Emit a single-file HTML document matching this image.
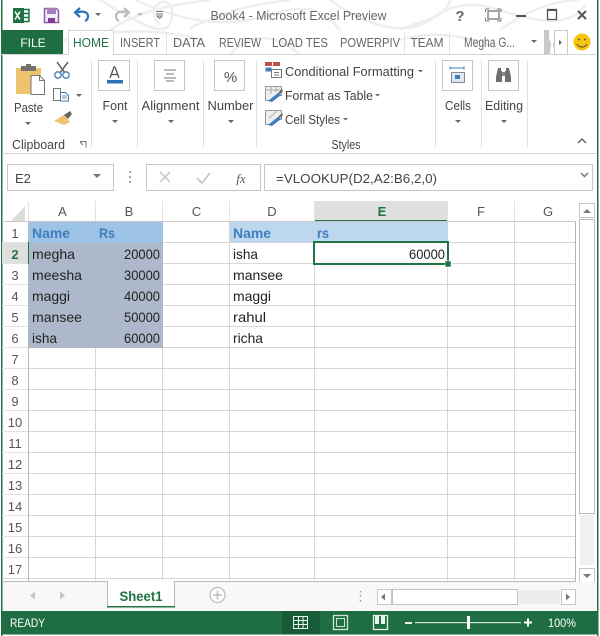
<!DOCTYPE html>
<html><head><meta charset="utf-8"><style>
html,body{margin:0;padding:0;background:#fff;width:600px;height:636px;overflow:hidden}
svg{display:block}
text{font-family:"Liberation Sans",sans-serif;fill:#444}
.c{font-size:14px;fill:#222}
.h{font-size:13px;fill:#555;text-anchor:middle}
.b{font-size:14px;font-weight:bold;fill:#3f7ebd}
.r{font-size:13px;fill:#555;text-anchor:middle}
.l{font-size:13px;fill:#444;text-anchor:middle}
.s{font-size:13px;fill:#444}
.t{font-size:12.5px;fill:#666;text-anchor:middle}
</style></head><body>
<svg width="600" height="636" viewBox="0 0 600 636" xmlns="http://www.w3.org/2000/svg">
<rect width="600" height="636" fill="#fff"/>
<!-- title decoration -->
<g fill="none" stroke="#eeeeee" stroke-width="2.500">
<path d="M100 0C150 30 170 40 172 15S140 5 160 25"/>
<path d="M110 30C140 10 170 5 210 0"/>
<path d="M135 0C180 20 220 30 270 15C300 5 320 5 340 30"/>
<path d="M190 28C230 10 250 5 290 0"/>
<path d="M330 0C370 30 410 35 430 20S470 0 500 10C530 20 570 30 585 5"/>
<path d="M400 30C420 20 445 20 450 0"/>
<path d="M500 30C520 15 550 0 580 0"/>
<path d="M30 55C60 30 160 25 200 40M300 55C280 35 250 30 230 55M400 40C430 30 470 35 500 50"/>
</g>
<!-- window borders -->
<rect x="1" y="0" width="1.500" height="636" fill="#217346"/>
<rect x="597" y="0" width="1.500" height="636" fill="#217346"/>
<!-- QAT -->
<rect x="13" y="8" width="11" height="15" fill="#1e7145"/>
<path d="M24 9.500h5v12h-5M24 13.500h5M24 17.500h5" fill="none" stroke="#1e7145" stroke-width="1.500"/>
<path d="M15 11.500l5 8M20 11.500l-5 8" stroke="#fff" stroke-width="1.500"/>
<path d="M44.500 8.500h12l2 2v12h-14z" fill="#f4eff7" stroke="#8a5aa8" stroke-width="1.500"/>
<rect x="47" y="8" width="9" height="6" fill="#a47fbe"/>
<rect x="48" y="18" width="7" height="5" fill="#7d3c98"/>
<path d="M85 21c3-1 3-4 3-5 0-4-5-5-9-4h-2" fill="none" stroke="#2b72b8" stroke-width="2.200"/>
<path d="M80 8l-5 4.500 5 4.500" fill="none" stroke="#2b72b8" stroke-width="2.200"/>
<path d="M95 13h6l-3 3z" fill="#666"/>
<path d="M119 21c-3-1-3-4-3-5 0-4 5-5 9-4h2" fill="none" stroke="#bbb" stroke-width="2.200"/>
<path d="M124 8l5 4.500-5 4.500" fill="none" stroke="#bbb" stroke-width="2.200"/>
<path d="M137 13h6l-3 3z" fill="#bbb"/>
<path d="M156 11.500h7M156 14h7M157 16h5l-2.500 2.500z" fill="none" stroke="#777"/>
<text x="298.500" y="20" style="font-size:13px;fill:#666;text-anchor:middle" textLength="176" lengthAdjust="spacingAndGlyphs">Book4 - Microsoft Excel Preview</text>
<text x="460" y="21" style="font-size:15px;font-weight:bold;fill:#666;text-anchor:middle">?</text>
<rect x="488" y="11" width="11" height="8" fill="none" stroke="#777" stroke-width="1.300"/>
<path d="M485.500 9h4M485.500 9v3M497 9h4M501 9v3M485.500 21h4M485.500 18v3M497 21h4M501 18v3" stroke="#777" fill="none"/>
<rect x="516" y="15" width="10" height="2" fill="#555"/>
<rect x="547.500" y="9.500" width="9" height="10" fill="none" stroke="#555" stroke-width="1.300"/><rect x="547" y="9" width="10" height="2" fill="#555"/>
<path d="M578 11l8 8M586 11l-8 8" stroke="#555" stroke-width="2"/>
<!-- tabs -->
<rect x="2" y="30" width="61" height="25" fill="#1e6e42"/>
<text x="33" y="47" style="font-size:12px;fill:#fff;text-anchor:middle">FILE</text>
<path d="M0 54.500H68M114 54.500H596" stroke="#d4d4d4"/>
<path d="M68.500 55V30.500H113.500V55" fill="#fff" stroke="#d4d4d4"/>
<text x="91" y="47" style="font-size:12.500px;fill:#217346;text-anchor:middle" textLength="36" lengthAdjust="spacingAndGlyphs">HOME</text>
<text x="140" y="47" class="t" textLength="40" lengthAdjust="spacingAndGlyphs">INSERT</text>
<text x="189" y="47" class="t" textLength="32" lengthAdjust="spacingAndGlyphs">DATA</text>
<text x="240" y="47" class="t" textLength="42" lengthAdjust="spacingAndGlyphs">REVIEW</text>
<text x="300" y="47" class="t" textLength="56" lengthAdjust="spacingAndGlyphs">LOAD TES</text>
<text x="370" y="47" class="t" textLength="60" lengthAdjust="spacingAndGlyphs">POWERPIV</text>
<text x="427" y="47" class="t" textLength="33" lengthAdjust="spacingAndGlyphs">TEAM</text>
<path d="M166.500 32V54M404.500 32V54M449.500 32V54" stroke="#e4e4e4"/>
<text x="464" y="47" style="font-size:13.500px;fill:#666" textLength="51" lengthAdjust="spacingAndGlyphs">Megha G...</text>
<path d="M531 40h6l-3 3z" fill="#666"/>
<path d="M544 30h11v24h-11z" fill="#c8c8c8"/><path d="M549 30h6v11l-2 3 2 10h-5l1-11-2-5z" fill="#fff"/>
<rect x="554.500" y="30.500" width="13" height="24" fill="#fff" stroke="#ccc"/>
<path d="M559 40l3 2.500-3 2.500z" fill="#666"/>
<circle cx="582" cy="42" r="8.500" fill="#f5c60c"/>
<circle cx="579" cy="39.500" r="1" fill="#654"/><circle cx="585" cy="39.500" r="1" fill="#654"/>
<path d="M577 44c2 4 8 4 10 0" fill="none" stroke="#654" stroke-width="1.200"/>
<!-- ribbon separators -->
<path d="M91.500 60V148M137.500 60V148M203.500 60V148M256.500 60V148M435.500 60V148M481.500 60V148M527.500 60V148" stroke="#e2e2e2"/>
<path d="M2 153.500H597" stroke="#d4d4d4"/>
<!-- Paste -->
<rect x="16" y="68" width="25" height="26" fill="#eec36f"/>
<rect x="21" y="66" width="15" height="5" fill="#77706a"/><rect x="26" y="64" width="5" height="4" fill="#77706a"/>
<path d="M31 75.500h8.500l5 5v14H31z" fill="#fff" stroke="#777"/>
<path d="M39.500 75.500v5h5" fill="none" stroke="#777"/>
<text x="28.500" y="112" class="l" textLength="29" lengthAdjust="spacingAndGlyphs">Paste</text>
<path d="M25 122h6l-3 3z" fill="#666"/>
<!-- cut copy painter -->
<path d="M57 62l8 11M68 62l-8 11" stroke="#666" stroke-width="1.500"/>
<circle cx="58" cy="75" r="3.200" fill="none" stroke="#3f7ebd" stroke-width="1.300"/><circle cx="66" cy="75" r="3.200" fill="none" stroke="#3f7ebd" stroke-width="1.300"/>
<path d="M53.500 88.500h7v12h-7z" fill="#fff" stroke="#777"/><path d="M60.500 92.500h5l3 3v5.500h-8z" fill="#fff" stroke="#3f7ebd"/>
<path d="M62 96h5M62 98h5" stroke="#888"/>
<path d="M76 94h6l-3 3z" fill="#666"/>
<path d="M54 121l10-6 6 7-6 3z" fill="#eec36f"/><path d="M64 115l6-4 2 3-4 5z" fill="#666"/>
<text x="12" y="149" class="s" textLength="53" lengthAdjust="spacingAndGlyphs">Clipboard</text>
<path d="M80 141.500h6v6M83 145l-3-3" fill="none" stroke="#777"/>
<!-- Font Alignment Number -->
<rect x="98.500" y="60.500" width="31" height="30" fill="#fff" stroke="#c6c6c6"/>
<path d="M110 78l4-11h1l4 11M111.500 74.500h6" fill="none" stroke="#555" stroke-width="1.300"/>
<rect x="107" y="80" width="16" height="3.500" fill="#2b72b8"/>
<text x="115" y="110" class="l" textLength="25" lengthAdjust="spacingAndGlyphs">Font</text>
<path d="M112 120h6l-3 3z" fill="#666"/>
<rect x="154.500" y="60.500" width="30" height="30" fill="#fff" stroke="#c6c6c6"/>
<path d="M164 70h12M166 74h8M164 78h12M166 81h8" stroke="#777"/>
<text x="170.500" y="110" class="l" textLength="58" lengthAdjust="spacingAndGlyphs">Alignment</text>
<path d="M168 120h6l-3 3z" fill="#666"/>
<rect x="214.500" y="60.500" width="30" height="30" fill="#fff" stroke="#c6c6c6"/>
<text x="230.500" y="82" style="font-size:15px;fill:#555;text-anchor:middle">%</text>
<text x="230.500" y="110" class="l" textLength="46" lengthAdjust="spacingAndGlyphs">Number</text>
<path d="M228 120h6l-3 3z" fill="#666"/>
<!-- styles -->
<rect x="265" y="62" width="7" height="4" fill="#c0504d"/><rect x="273" y="62" width="7" height="4" fill="#c0504d"/>
<rect x="265.500" y="67.500" width="6" height="4" fill="#3f7ebd"/><rect x="271.500" y="69.500" width="10" height="8" fill="#fff" stroke="#777"/><path d="M274 72.500h5M274 75h5" stroke="#777"/>
<path d="M265.500 86.500h16v9h-6l-6 5h-4z" fill="#eee" stroke="#999"/><path d="M271 86v8M276 86v6M265 90h16" stroke="#aaa"/><path d="M268 101l10-8 3 2-9 7z" fill="#3f7ebd"/><path d="M278 93l4-4 1 2-3 3z" fill="#666"/>
<path d="M265.500 110.500h16v9h-6l-6 5h-4z" fill="#eee" stroke="#999"/><path d="M269 118l8-7" stroke="#ccc" stroke-width="2"/><path d="M268 125l10-8 3 2-9 7z" fill="#3f7ebd"/><path d="M278 117l4-4 1 2-3 3z" fill="#666"/>
<text x="285" y="76" class="s" textLength="129" lengthAdjust="spacingAndGlyphs">Conditional Formatting</text>
<path d="M418 70h5l-2.500 2.500z" fill="#666"/>
<text x="285" y="100" class="s" textLength="88" lengthAdjust="spacingAndGlyphs">Format as Table</text>
<path d="M375 94h5l-2.500 2.500z" fill="#666"/>
<text x="285" y="124" class="s" textLength="55" lengthAdjust="spacingAndGlyphs">Cell Styles</text>
<path d="M343 118h5l-2.500 2.500z" fill="#666"/>
<text x="346" y="149" class="l" textLength="29" lengthAdjust="spacingAndGlyphs">Styles</text>
<!-- cells editing -->
<rect x="442.500" y="60.500" width="30" height="30" fill="#fff" stroke="#c6c6c6"/>
<path d="M450 68h14M450 66.500v3M464 66.500v3" stroke="#3f7ebd"/>
<rect x="451.500" y="72.500" width="13" height="10" fill="#dde8f3" stroke="#888"/><rect x="455" y="75" width="5" height="4" fill="#3f7ebd"/>
<text x="458" y="110" class="l" textLength="26" lengthAdjust="spacingAndGlyphs">Cells</text>
<path d="M455 120h6l-3 3z" fill="#666"/>
<rect x="488.500" y="60.500" width="30" height="30" fill="#fff" stroke="#c6c6c6"/>
<path d="M498 68h3v3h1v11h-6v-5zM509 68h-3v3h-1v11h6v-5z" fill="#6e6e6e"/><rect x="502" y="72" width="3" height="4" fill="#8a8a8a"/>
<text x="504" y="110" class="l" textLength="38" lengthAdjust="spacingAndGlyphs">Editing</text>
<path d="M501 120h6l-3 3z" fill="#666"/>
<path d="M578 143l4-4 4 4" fill="none" stroke="#666" stroke-width="1.500"/>
<!-- formula bar -->
<rect x="7.500" y="164.500" width="106" height="26" fill="#fff" stroke="#c6c6c6"/>
<text x="15" y="183" style="font-size:13px;fill:#444">E2</text>
<path d="M93 174h8l-4 4z" fill="#777"/>
<path d="M130 171v2M130 176v2M130 181v2" stroke="#888" stroke-width="1.500"/>
<rect x="146.500" y="164.500" width="114" height="26" fill="#fff" stroke="#c6c6c6"/>
<path d="M160 172l10 10M170 172l-10 10" stroke="#ccc" stroke-width="1.800"/>
<path d="M197 178l5 5 8-10" fill="none" stroke="#ccc" stroke-width="2"/>
<text x="241" y="183" style="font-family:'Liberation Serif',serif;font-style:italic;font-size:13px;fill:#555;text-anchor:middle">fx</text>
<rect x="264.500" y="164.500" width="328" height="26" fill="#fff" stroke="#c6c6c6"/>
<text x="276" y="183" style="font-size:13px;fill:#444" textLength="161" lengthAdjust="spacingAndGlyphs">=VLOOKUP(D2,A2:B6,2,0)</text>
<path d="M581 173l3.500 3.500 3.500-3.500" fill="none" stroke="#777" stroke-width="1.500"/>
<!-- column headers -->
<rect x="315" y="201" width="133" height="20" fill="#dfdfdf"/>
<rect x="314" y="220" width="134" height="2" fill="#217346"/>
<path d="M25 206v15H11z" fill="#dcdcdc"/>
<path d="M28.500 201V221M95.500 201V221M162.500 201V221M229.500 201V221M314.500 201V221M447.500 201V221M514.500 201V221" stroke="#e2e2e2"/>
<path d="M2 221.500H576" stroke="#c8c8c8"/>
<text x="62.500" y="216" class="h">A</text>
<text x="129" y="216" class="h">B</text>
<text x="196.500" y="216" class="h">C</text>
<text x="272" y="216" class="h">D</text>
<text x="382" y="216" style="font-size:13px;font-weight:bold;fill:#217346;text-anchor:middle">E</text>
<text x="481" y="216" class="h">F</text>
<text x="548" y="216" class="h">G</text>
<!-- gridlines -->
<path d="M29 242.500H576M29 263.500H576M29 284.500H576M29 305.500H576M29 326.500H576M29 347.500H576M29 368.500H576M29 389.500H576M29 410.500H576M29 431.500H576M29 452.500H576M29 473.500H576M29 494.500H576M29 515.500H576M29 536.500H576M29 557.500H576M2 578.500H576" stroke="#d6d6d6"/>
<path d="M95.500 222V580M162.500 222V580M229.500 222V580M314.500 222V580M447.500 222V580M514.500 222V580" stroke="#d6d6d6"/>
<path d="M575.500 222V581" stroke="#b4b4b4"/>
<path d="M28.500 222V581" stroke="#b8b8b8"/>
<path d="M2 242.500H28M2 263.500H28M2 284.500H28M2 305.500H28M2 326.500H28M2 347.500H28M2 368.500H28M2 389.500H28M2 410.500H28M2 431.500H28M2 452.500H28M2 473.500H28M2 494.500H28M2 515.500H28M2 536.500H28M2 557.500H28" stroke="#e2e2e2"/>
<rect x="2" y="243" width="26" height="20" fill="#dfdfdf"/>
<rect x="28" y="242" width="2" height="22" fill="#217346"/>
<!-- fills -->
<rect x="29" y="222" width="134" height="21" fill="#9dc3e6"/>
<rect x="29" y="243" width="134" height="105" fill="#adb9ca"/>
<rect x="230" y="222" width="218" height="20" fill="#bdd7ee"/>
<!-- row numbers -->
<g>
<text x="15" y="238" class="r">1</text>
<text x="15" y="259" style="font-size:13px;font-weight:bold;fill:#217346;text-anchor:middle">2</text>
<text x="15" y="280" class="r">3</text>
<text x="15" y="301" class="r">4</text>
<text x="15" y="322" class="r">5</text>
<text x="15" y="343" class="r">6</text>
<text x="15" y="364" class="r">7</text>
<text x="15" y="385" class="r">8</text>
<text x="15" y="406" class="r">9</text>
<text x="15" y="427" class="r">10</text>
<text x="15" y="448" class="r">11</text>
<text x="15" y="469" class="r">12</text>
<text x="15" y="490" class="r">13</text>
<text x="15" y="511" class="r">14</text>
<text x="15" y="532" class="r">15</text>
<text x="15" y="553" class="r">16</text>
<text x="15" y="574" class="r">17</text>
</g>
<!-- cells -->
<text x="32" y="238" class="b" textLength="38" lengthAdjust="spacingAndGlyphs">Name</text>
<text x="99" y="238" class="b" textLength="16" lengthAdjust="spacingAndGlyphs">Rs</text>
<text x="32" y="259" class="c" textLength="43" lengthAdjust="spacingAndGlyphs">megha</text>
<text x="32" y="280" class="c" textLength="50" lengthAdjust="spacingAndGlyphs">meesha</text>
<text x="32" y="301" class="c" textLength="38" lengthAdjust="spacingAndGlyphs">maggi</text>
<text x="32" y="322" class="c" textLength="50" lengthAdjust="spacingAndGlyphs">mansee</text>
<text x="32" y="343" class="c" textLength="25" lengthAdjust="spacingAndGlyphs">isha</text>
<text x="124" y="259" class="c" textLength="36" lengthAdjust="spacingAndGlyphs">20000</text>
<text x="124" y="280" class="c" textLength="36" lengthAdjust="spacingAndGlyphs">30000</text>
<text x="124" y="301" class="c" textLength="36" lengthAdjust="spacingAndGlyphs">40000</text>
<text x="124" y="322" class="c" textLength="36" lengthAdjust="spacingAndGlyphs">50000</text>
<text x="124" y="343" class="c" textLength="36" lengthAdjust="spacingAndGlyphs">60000</text>
<text x="233" y="238" class="b" textLength="38" lengthAdjust="spacingAndGlyphs">Name</text>
<text x="317" y="238" class="b" textLength="12" lengthAdjust="spacingAndGlyphs">rs</text>
<text x="233" y="259" class="c" textLength="25" lengthAdjust="spacingAndGlyphs">isha</text>
<text x="233" y="280" class="c" textLength="50" lengthAdjust="spacingAndGlyphs">mansee</text>
<text x="233" y="301" class="c" textLength="38" lengthAdjust="spacingAndGlyphs">maggi</text>
<text x="233" y="322" class="c" textLength="33" lengthAdjust="spacingAndGlyphs">rahul</text>
<text x="233" y="343" class="c" textLength="30" lengthAdjust="spacingAndGlyphs">richa</text>
<text x="409" y="259" class="c" textLength="36" lengthAdjust="spacingAndGlyphs">60000</text>
<!-- selection -->
<rect x="314" y="242" width="134" height="22" fill="none" stroke="#217346" stroke-width="2"/>
<rect x="445" y="261" width="6" height="6" fill="#217346" stroke="#fff" stroke-width=".5"/>
<!-- vertical scrollbar -->
<rect x="579.500" y="203.500" width="15" height="14" fill="#fff" stroke="#c6c6c6"/>
<path d="M583 213l4-4 4 4z" fill="#777"/>
<rect x="580" y="515" width="14" height="50" fill="#f0f0f0"/>
<rect x="579.500" y="219.500" width="15" height="294" fill="#fff" stroke="#bdbdbd"/>
<rect x="579.500" y="568.500" width="15" height="14" fill="#fff" stroke="#c6c6c6"/>
<path d="M583 574l4 4 4-4z" fill="#777"/>
<!-- sheet tabs -->
<rect x="2.500" y="582" width="594.500" height="29" fill="#f8f8f8"/>
<path d="M2 581.500H107.500M174.500 581.500H576" fill="none" stroke="#b8b8b8"/>
<rect x="108" y="581" width="66" height="26" fill="#fff"/>
<path d="M107.500 581V606M174.500 581V606" stroke="#b8b8b8"/>
<rect x="107" y="606" width="68" height="1.500" fill="#217346"/>
<text x="141" y="601" style="font-size:14px;font-weight:bold;fill:#217346;text-anchor:middle" textLength="43" lengthAdjust="spacingAndGlyphs">Sheet1</text>
<path d="M30 595.500l5-4v8z" fill="#c4c4c4"/>
<path d="M60 591.500l5 4-5 4z" fill="#c4c4c4"/>
<circle cx="217.500" cy="595" r="7.500" fill="#fff" stroke="#bbb" stroke-width="1.300"/>
<path d="M213 595h9M217.500 590.500v9" stroke="#bbb" stroke-width="1.500"/>
<path d="M360.500 591v1.500M360.500 595v1.500M360.500 600v1.500" stroke="#999" stroke-width="1.500"/>
<rect x="377.500" y="589.500" width="14" height="15" fill="#fff" stroke="#c6c6c6"/>
<path d="M381 597l4-3.500v7z" fill="#777"/>
<rect x="392.500" y="589.500" width="125" height="15" fill="#fff" stroke="#c0c0c0"/>
<rect x="519" y="590" width="41" height="14" fill="#ececec"/>
<rect x="561.500" y="589.500" width="14" height="15" fill="#fff" stroke="#c6c6c6"/>
<path d="M566 593.500l4 3.500-4 3.500z" fill="#777"/>
<!-- status bar -->
<rect x="1" y="611" width="597.500" height="23.500" fill="#1f6e43"/>
<rect x="282" y="611" width="38" height="23.500" fill="#185c37"/>
<text x="10" y="627" style="font-size:11.500px;fill:#fff" textLength="35" lengthAdjust="spacingAndGlyphs">READY</text>
<path d="M293.500 616.500h14v12h-14zM298.500 616.500v12M303 616.500v12M293.500 620.500h14M293.500 624.500h14" fill="none" stroke="#e8f2ec"/>
<rect x="333.500" y="615.500" width="14" height="14" fill="none" stroke="#cfe3d7" stroke-width="1.300"/><rect x="336.500" y="618.500" width="8" height="8" fill="none" stroke="#cfe3d7"/>
<path d="M373.500 615.500h14v14h-14z" fill="none" stroke="#e8f2ec" stroke-width="1.300"/><rect x="375" y="615" width="4" height="9" fill="#e8f2ec"/><rect x="381" y="615" width="4" height="9" fill="#e8f2ec"/>
<rect x="405" y="622" width="7" height="2" fill="#e8f2ec"/>
<rect x="415" y="622" width="106" height="1.200" fill="#cfe3d7"/>
<rect x="467" y="616" width="3" height="13" fill="#fff"/>
<path d="M524 622.500h8M528 618.500v8" stroke="#fff" stroke-width="2"/>
<text x="548" y="627" style="font-size:12px;fill:#fff" textLength="28" lengthAdjust="spacingAndGlyphs">100%</text>
</svg>
</body></html>
